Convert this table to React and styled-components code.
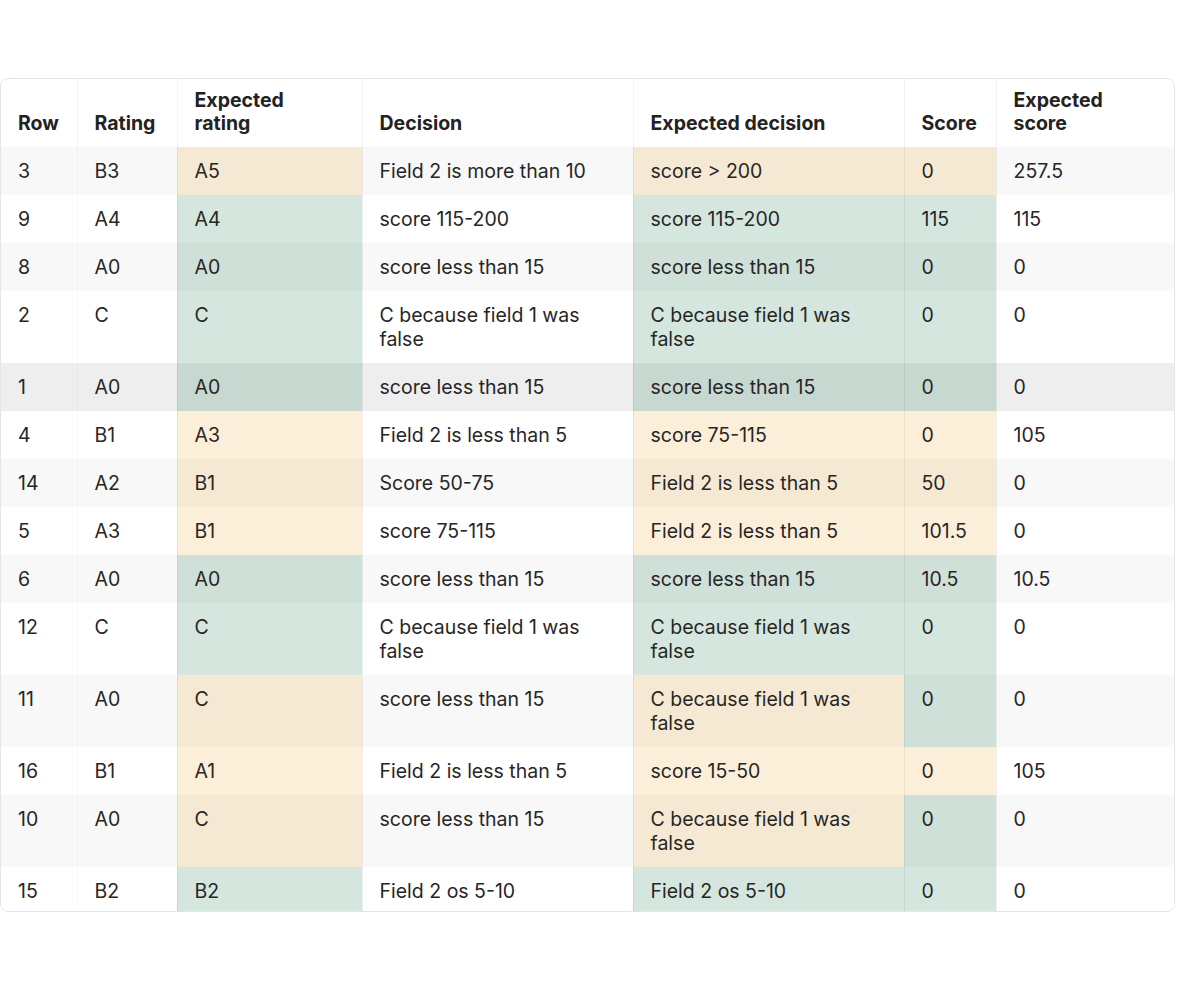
import React from 'react';
import styled, { createGlobalStyle, css } from 'styled-components';

const GlobalStyle = createGlobalStyle`
	html, body {
		margin: 0;
		padding: 0;
		background: #fff;
	}
	body {
		font-family: Inter, "Noto Sans", "Liberation Sans", sans-serif;
		color: #262626;
	}
`;

const columns = [
	{ title: 'Row', width: 76 },
	{ title: 'Rating', width: 100 },
	{ title: 'Expected rating', width: 185, stacked: true },
	{ title: 'Decision', width: 271 },
	{ title: 'Expected decision', width: 271 },
	{ title: 'Score', width: 92 },
	{ title: 'Expected score', width: 178, stacked: true },
];

// marks for expected rating, expected decision, score: g = match, a = mismatch
const rows = [
	['3', 'B3', 'A5', 'Field 2 is more than 10', 'score > 200', '0', '257.5', 'aaa'],
	['9', 'A4', 'A4', 'score 115-200', 'score 115-200', '115', '115', 'ggg'],
	['8', 'A0', 'A0', 'score less than 15', 'score less than 15', '0', '0', 'ggg'],
	['2', 'C', 'C', 'C because field 1 was false', 'C because field 1 was false', '0', '0', 'ggg'],
	['1', 'A0', 'A0', 'score less than 15', 'score less than 15', '0', '0', 'ggg'],
	['4', 'B1', 'A3', 'Field 2 is less than 5', 'score 75-115', '0', '105', 'aaa'],
	['14', 'A2', 'B1', 'Score 50-75', 'Field 2 is less than 5', '50', '0', 'aaa'],
	['5', 'A3', 'B1', 'score 75-115', 'Field 2 is less than 5', '101.5', '0', 'aaa'],
	['6', 'A0', 'A0', 'score less than 15', 'score less than 15', '10.5', '10.5', 'ggg'],
	['12', 'C', 'C', 'C because field 1 was false', 'C because field 1 was false', '0', '0', 'ggg'],
	['11', 'A0', 'C', 'score less than 15', 'C because field 1 was false', '0', '0', 'aag'],
	['16', 'B1', 'A1', 'Field 2 is less than 5', 'score 15-50', '0', '105', 'aaa'],
	['10', 'A0', 'C', 'score less than 15', 'C because field 1 was false', '0', '0', 'aag'],
	['15', 'B2', 'B2', 'Field 2 os 5-10', 'Field 2 os 5-10', '0', '0', 'ggg'],
];

const markedCols = { 2: 0, 4: 1, 5: 2 };
const hoveredRow = 4;

const ResultsTable = () => (
	<Page>
		<GlobalStyle />
		<TableFrame>
			<Table>
				<colgroup>
					{columns.map(col => (
						<col key={col.title} style={{ width: col.width }} />
					))}
				</colgroup>
				<thead>
					<tr>
						{columns.map(col => (
							<HeadCell key={col.title}>
								<HeadLabel stacked={col.stacked}>{col.title}</HeadLabel>
							</HeadCell>
						))}
					</tr>
				</thead>
				<tbody>
					{rows.map((row, i) => {
						const marks = row[7];
						return (
							<BodyRow key={i} striped={i % 2 === 0} hovered={i === hoveredRow}>
								{row.slice(0, 7).map((value, c) => (
									<Cell key={c} mark={c in markedCols ? marks[markedCols[c]] : null}>
										{value}
									</Cell>
								))}
							</BodyRow>
						);
					})}
				</tbody>
			</Table>
		</TableFrame>
	</Page>
);

const Page = styled.div`
	padding: 78px 9px 0 0;
`;

const TableFrame = styled.div`
	height: 834px;
	box-sizing: border-box;
	border: 1px solid #e2e5e9;
	border-radius: 8px;
	overflow: hidden;
	background: #fff;
`;

const Table = styled.table`
	width: 100%;
	table-layout: fixed;
	border-collapse: collapse;
	font-size: 19.5px;
	line-height: 24px;
`;

const HeadCell = styled.th`
	text-align: left;
	vertical-align: bottom;
	font-weight: 700;
	color: #222;
	line-height: 23px;
	padding: 10px 17px 12px;
	border-left: 1px solid #f3f3f3;

	&:first-child {
		border-left: none;
	}
`;

const HeadLabel = styled.span.withConfig({ shouldForwardProp: p => p !== 'stacked' })`
	display: inline-block;
	${p => p.stacked && 'width: min-content;'}
`;

const BodyRow = styled.tr.withConfig({ shouldForwardProp: p => !['striped', 'hovered'].includes(p) })`
	background: ${p => (p.hovered ? '#eeeeee' : p.striped ? '#f8f8f8' : '#ffffff')};
`;

const markColors = {
	g: 'rgba(45, 130, 90, 0.2)',
	a: 'rgba(235, 148, 2, 0.15)',
};

const Cell = styled.td.withConfig({ shouldForwardProp: p => p !== 'mark' })`
	vertical-align: top;
	padding: 12px 17px;
	color: #262626;
	border-left: 1px solid rgba(0, 0, 0, 0.025);

	&:first-child {
		border-left: none;
	}

	${p =>
		p.mark &&
		css`
			background: ${markColors[p.mark]};
			border-left-color: rgba(0, 0, 0, 0.06);
			border-right: 1px solid rgba(0, 0, 0, 0.06);
		`}
`;

export default ResultsTable;
